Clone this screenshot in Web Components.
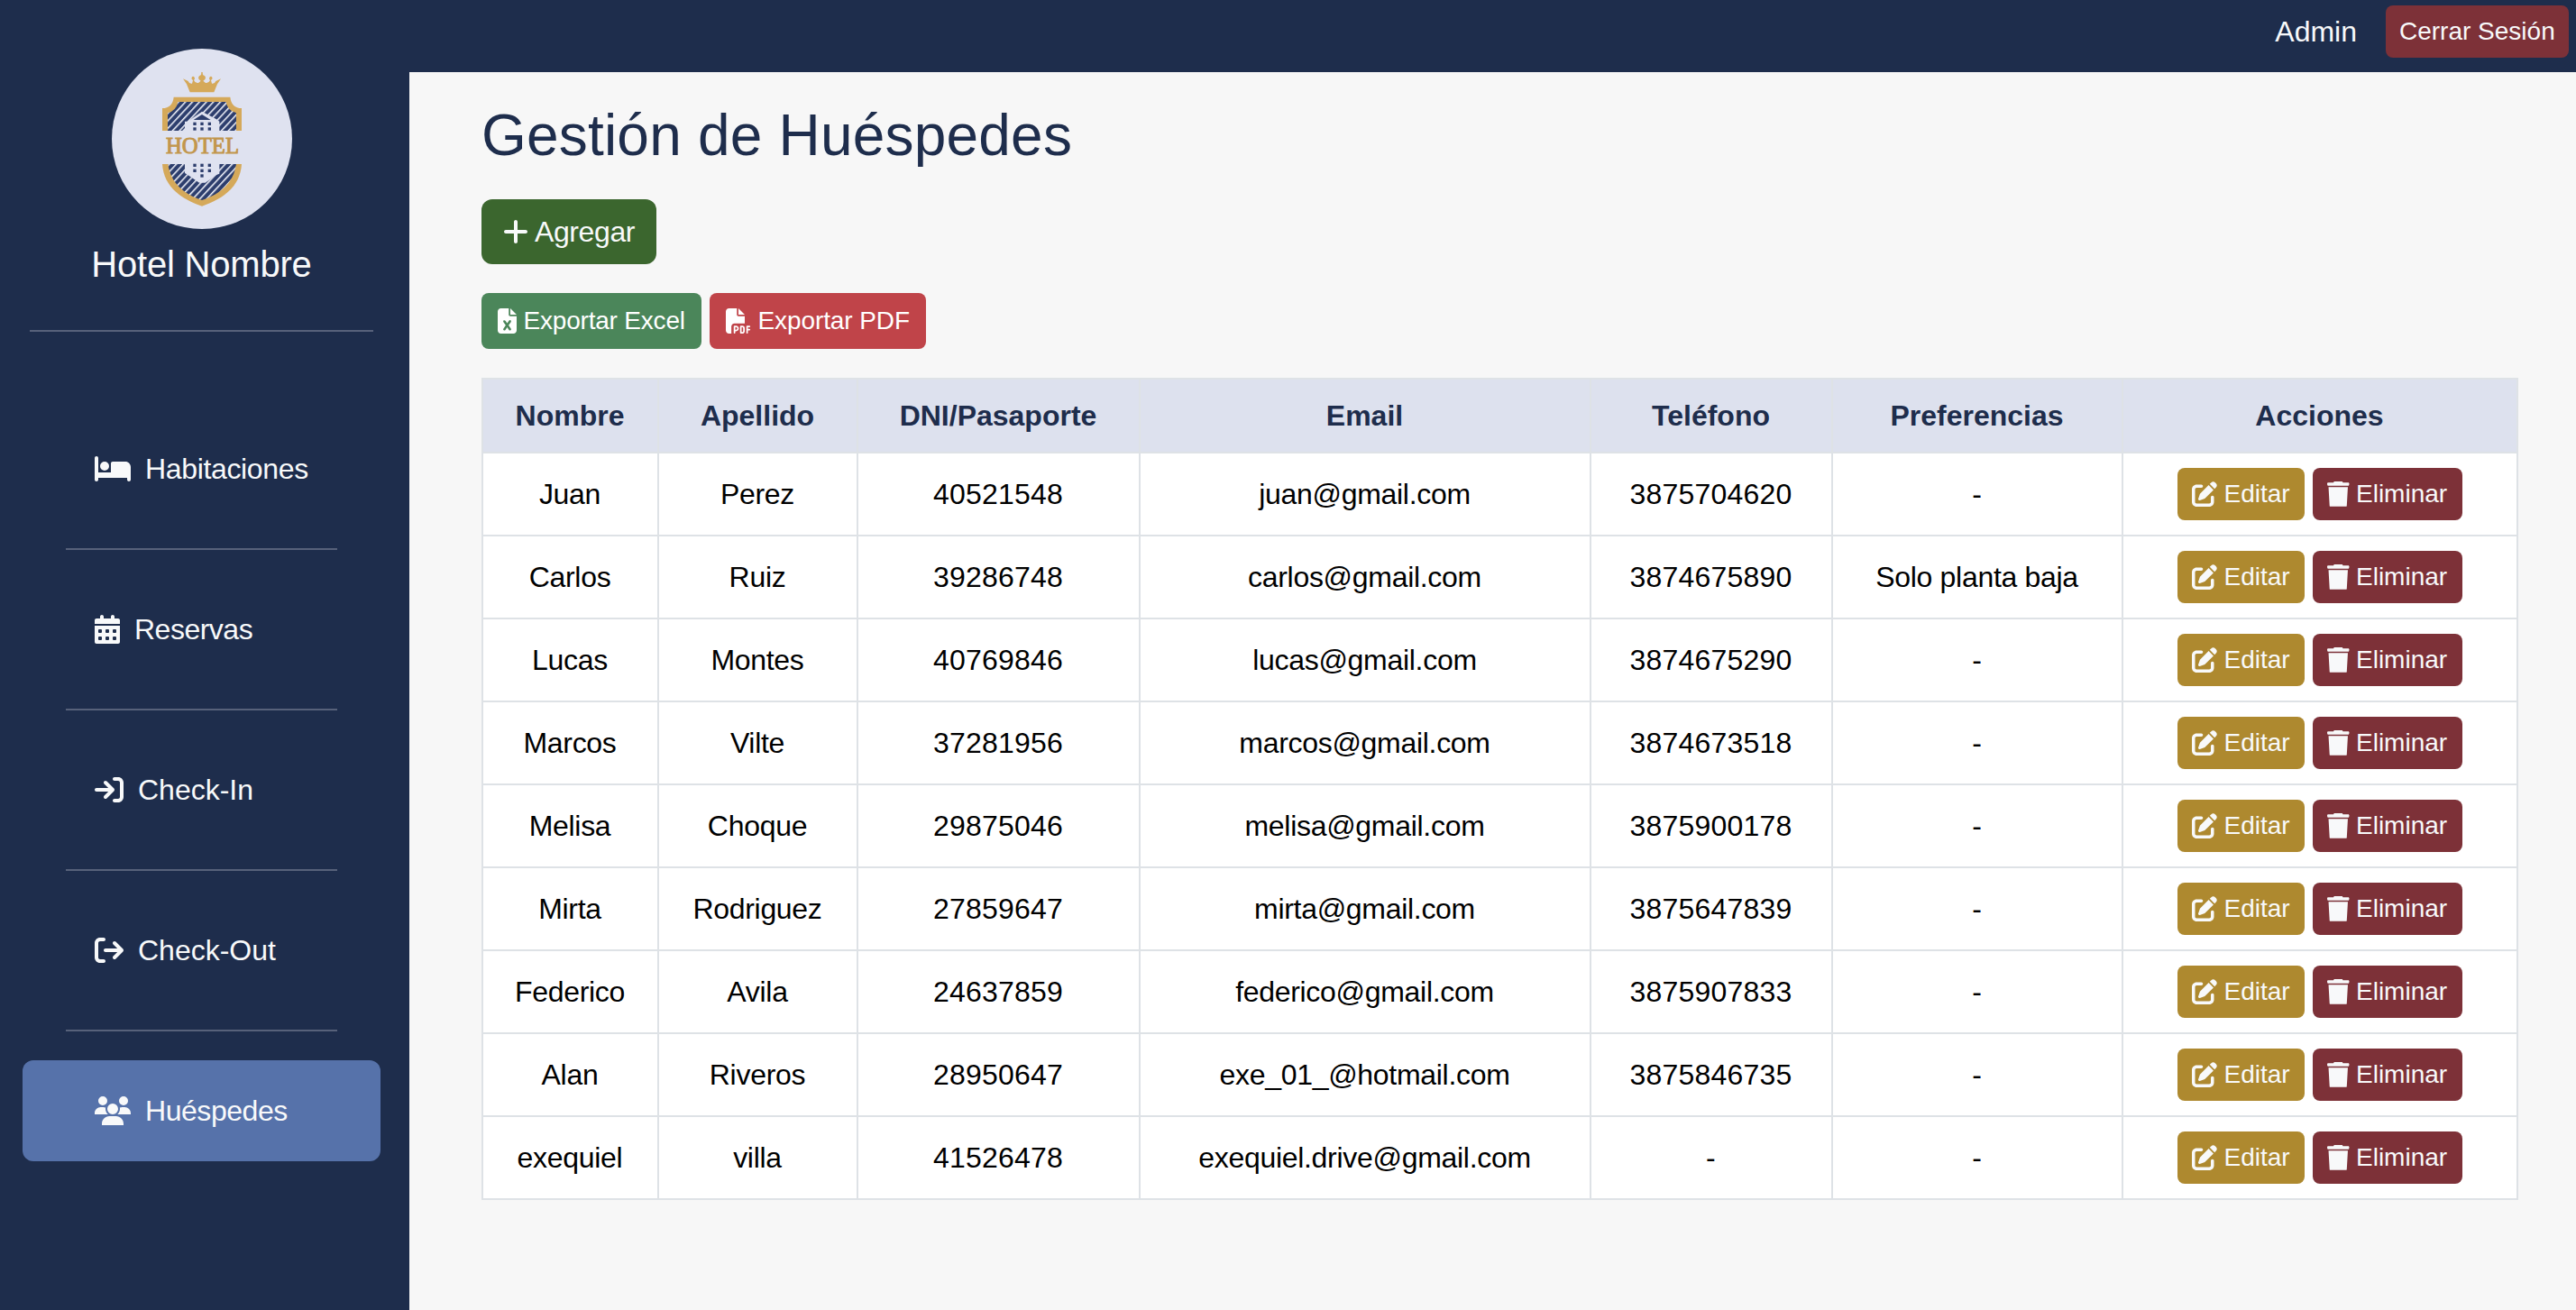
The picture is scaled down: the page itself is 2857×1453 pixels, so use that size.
<!DOCTYPE html>
<html lang="es">
<head>
<meta charset="utf-8">
<title>Gestión de Huéspedes</title>
<style>
html,body{margin:0;height:100%}
body{background:#f7f7f7;font-family:"Liberation Sans",Arial,sans-serif;font-size:32px;overflow:hidden;
--navy:#1e2d4c;--light:#f8f9fa;--wine:#7d3138}
</style>
</head>
<body>
<hotel-app></hotel-app>
<script>
const sq=(x,y)=>`M${x+16} ${y}h32a16 16 0 0 1 16 16v32a16 16 0 0 1-16 16h-32a16 16 0 0 1-16-16v-32a16 16 0 0 1 16-16z`;
const ICONS={
bed:[640,"M32 32c17.7 0 32 14.3 32 32V320H288V160c0-17.7 14.3-32 32-32H544c53 0 96 43 96 96V448c0 17.7-14.3 32-32 32s-32-14.3-32-32V416H64v32c0 17.7-14.3 32-32 32s-32-14.3-32-32V64C0 46.3 14.3 32 32 32zm144 96a80 80 0 1 1 0 160 80 80 0 1 1 0-160z"],
calendar:[448,"M128 0c17.7 0 32 14.3 32 32V64H288V32c0-17.7 14.3-32 32-32s32 14.3 32 32V64h64c17.7 0 32 14.3 32 32v64H0V96C0 78.3 14.3 64 32 64H96V32c0-17.7 14.3-32 32-32zM0 192H448V480c0 17.7-14.3 32-32 32H32c-17.7 0-32-14.3-32-32V192z"+[64,192,320].map(x=>sq(x,256)+sq(x,384)).join("")],
enter:[512,"M352 96l64 0c17.7 0 32 14.3 32 32l0 256c0 17.7-14.3 32-32 32l-64 0c-17.7 0-32 14.3-32 32s14.3 32 32 32l64 0c53 0 96-43 96-96l0-256c0-53-43-96-96-96l-64 0c-17.7 0-32 14.3-32 32s14.3 32 32 32zm-9.4 182.6c12.5-12.5 12.5-32.8 0-45.3l-128-128c-12.5-12.5-32.8-12.5-45.3 0s-12.5 32.8 0 45.3L242.7 224 32 224c-17.7 0-32 14.3-32 32s14.3 32 32 32l210.7 0-73.4 73.4c-12.5 12.5-12.5 32.8 0 45.3s32.8 12.5 45.3 0l128-128z"],
leave:[512,"M502.6 278.6c12.5-12.5 12.5-32.8 0-45.3l-128-128c-12.5-12.5-32.8-12.5-45.3 0s-12.5 32.8 0 45.3L402.7 224 192 224c-17.7 0-32 14.3-32 32s14.3 32 32 32l210.7 0-73.4 73.4c-12.5 12.5-12.5 32.8 0 45.3s32.8 12.5 45.3 0l128-128zM160 96c17.7 0 32-14.3 32-32s-14.3-32-32-32L96 32C43 32 0 75 0 128L0 384c0 53 43 96 96 96l64 0c17.7 0 32-14.3 32-32s-14.3-32-32-32l-64 0c-17.7 0-32-14.3-32-32l0-256c0-17.7 14.3-32 32-32l64 0z"],
users:[640,"M144 0a80 80 0 1 1 0 160A80 80 0 1 1 144 0zM512 0a80 80 0 1 1 0 160A80 80 0 1 1 512 0zM0 298.7C0 239.8 47.8 192 106.7 192h42.7c15.9 0 31 3.5 44.6 9.7c-1.3 7.2-1.9 14.7-1.9 22.3c0 38.2 16.8 72.5 43.3 96H0zM405.3 320c26.1-23.5 42.8-57.8 42.8-96c0-7.6-.7-15-1.9-22.3c13.6-6.3 28.7-9.7 44.6-9.7h42.7C592.2 192 640 239.8 640 298.7V320H405.3zM224 224a96 96 0 1 1 192 0 96 96 0 1 1 -192 0zM128 485.3C128 411.7 187.7 352 261.3 352H378.7C452.3 352 512 411.7 512 485.3V512H128z"],
plus:[448,"M256 80c0-17.7-14.3-32-32-32s-32 14.3-32 32V224H48c-17.7 0-32 14.3-32 32s14.3 32 32 32H192V432c0 17.7 14.3 32 32 32s32-14.3 32-32V288H400c17.7 0 32-14.3 32-32s-14.3-32-32-32H256V80z"],
excel:[384,"M64 0C28.7 0 0 28.7 0 64V448c0 35.3 28.7 64 64 64H320c35.3 0 64-28.7 64-64V160H256c-17.7 0-32-14.3-32-32V0H64zM256 0V128H384L256 0zM155.7 250.2L192 302.1l36.3-51.9c7.6-10.9 22.6-13.5 33.4-5.9s13.5 22.6 5.9 33.4L221.3 344l46.4 66.2c7.6 10.9 5 25.8-5.9 33.4s-25.8 5-33.4-5.9L192 385.8l-36.3 51.9c-7.6 10.9-22.6 13.5-33.4 5.9s-13.5-22.6-5.9-33.4L162.7 344l-46.4-66.2c-7.6-10.9-5-25.8 5.9-33.4s25.8-5 33.4 5.9z"],
pdf:[512,"M0 64C0 28.7 28.7 0 64 0H224V128c0 17.7 14.3 32 32 32H384V304H176c-35.3 0-64 28.7-64 64V512H64c-35.3 0-64-28.7-64-64V64zm384 64H256V0L384 128zM176 352h32c30.9 0 56 25.1 56 56s-25.1 56-56 56H192v32c0 8.8-7.2 16-16 16s-16-7.2-16-16V368c0-8.8 7.2-16 16-16zm32 80c13.3 0 24-10.7 24-24s-10.7-24-24-24H192v48h16zm96-80h32c26.5 0 48 21.5 48 48v64c0 26.5-21.5 48-48 48H304c-8.8 0-16-7.2-16-16V368c0-8.8 7.2-16 16-16zm32 128c8.8 0 16-7.2 16-16V400c0-8.8-7.2-16-16-16H320v96h16zm80-112c0-8.8 7.2-16 16-16h48c8.8 0 16 7.2 16 16s-7.2 16-16 16H448v32h32c8.8 0 16 7.2 16 16s-7.2 16-16 16H448v48c0 8.8-7.2 16-16 16s-16-7.2-16-16V368z"],
edit:[512,"M471.6 21.7c-21.9-21.9-57.3-21.9-79.2 0L362.3 51.7l97.9 97.9 30.1-30.1c21.9-21.9 21.9-57.3 0-79.2L471.6 21.7zm-299.2 220c-6.1 6.1-10.8 13.6-13.5 21.9l-29.6 88.8c-2.9 8.6-.6 18.1 5.8 24.6s15.9 8.7 24.6 5.8l88.8-29.6c8.2-2.7 15.7-7.4 21.9-13.5L437.7 172.3 339.7 74.3 172.4 241.7zM96 64C43 64 0 107 0 160V416c0 53 43 96 96 96H352c53 0 96-43 96-96V320c0-17.7-14.3-32-32-32s-32 14.3-32 32v96c0 17.7-14.3 32-32 32H96c-17.7 0-32-14.3-32-32V160c0-17.7 14.3-32 32-32h96c17.7 0 32-14.3 32-32s-14.3-32-32-32H96z"],
trash:[448,"M135.2 8L128 22H20C8 22 0 32 0 48S10 88 24 88H424c14 0 24-24 24-40S440 22 428 22H320l-7.2-14C310 2 300 0 290 0H158c-10 0-19 2-22.800 8zM420 112H28L50 500Q51 508 58 508H390Q397 508 398 500L420 112z"]
};
class Base extends HTMLElement{
  constructor(){super();this.attachShadow({mode:"open"})}
  connectedCallback(){this.shadowRoot.innerHTML=this.render()}
}
const define=(n,render)=>customElements.define(n,class extends Base{render(){return render(this)}});

define("app-icon",el=>{
  const [w,d]=ICONS[el.getAttribute("name")];
  return `<style>:host{display:block;flex:none}svg{display:block;height:1em;width:${w/512}em;fill:currentColor}</style>
  <svg viewBox="0 0 ${w} 512"><path fill-rule="evenodd" d="${d}"/></svg>`;
});

define("app-button",()=>`<style>
:host{display:inline-block;flex:none;box-sizing:border-box}
button{all:unset;box-sizing:border-box;display:flex;align-items:center;gap:7.5px;width:100%;height:58px;padding-left:16px;border-radius:8px;
background:var(--wine);color:var(--light);font:28px/42px "Liberation Sans",Arial,sans-serif;white-space:nowrap}
:host([kind=edit]) button{background:#ae892f}
:host([kind=excel]) button{background:#4b865a;height:62px;padding-left:18px;letter-spacing:-.2px;color:#fff}
:host([kind=pdf]) button{background:#c04449;height:62px;padding-left:18px;letter-spacing:-.1px;color:#fff}
:host([kind=add]) button{background:#3b662e;height:72px;padding-left:24px;gap:7px;border-radius:12px;font-size:32px;letter-spacing:-.4px}
:host([kind=logout]) button{padding-left:15px}
</style><button><slot name="icon"></slot><slot></slot></button>`);

define("hotel-logo",()=>{
  const win=(x,y)=>`<rect x="${x-5}" y="${y-5}" width="10" height="10"/>`;
  const wins=[292,309,430,448].map(y=>[318,342,367].map(x=>win(x,y)).join("")).join("")+win(342,465);
  return `<style>:host{display:block;width:200px;height:200px}svg{display:block}</style>
<svg width="200" height="200" viewBox="42 42 600 600">
<defs><pattern id="s" width="17" height="17" patternUnits="userSpaceOnUse" patternTransform="rotate(43)">
<rect width="17" height="17" fill="#2d3e6d"/><rect width="4.6" height="17" fill="#f1f3fa"/></pattern></defs>
<circle cx="342" cy="342" r="300" fill="#dfe2f0"/>
<g fill="#d5a95a">
<path d="M302 187L291 160L279 142L296 150Q300 160 309 158L312 147Q305 143 308 137Q312 132 317 137Q320 143 315 147Q320 158 331 155L338 149Q330 146 330 138Q332 132 338 130L340 126Q337 122 342 119Q347 122 344 126L346 130Q353 132 354 138Q354 146 346 149L353 155Q364 158 369 147Q364 143 367 137Q372 132 376 137Q379 143 372 147L375 158Q384 160 388 150L405 142L393 160L382 187Z"/>
<path d="M210 315V240Q244 240 248 203H436Q440 240 474 240V315Z"/>
<path d="M210 426H474C469 505 405 545 342 566C279 545 215 505 210 426Z"/></g>
<g fill="url(#s)"><path d="M228 315V256Q256 249 262 219H422Q428 249 456 256V315Z"/>
<path d="M229 426H456C447 490 402 526 342 546C282 526 238 490 229 426Z"/></g>
<g fill="#dfe2f0"><path d="M276 315L285 306V284L295 284L342 251L389 276L400 284V315Z"/>
<path d="M285 426H400V458L390 462L353 488H333L296 463L285 456Z"/></g>
<g fill="#2d3e6d"><path d="M314 279L342 261L371 279Z"/>${wins}</g>
<text x="222" y="389" font-family="'Liberation Serif',serif" font-size="77" textLength="243" lengthAdjust="spacingAndGlyphs" fill="#c2964c" stroke="#c2964c" stroke-width="3">HOTEL</text>
</svg>`});

define("nav-item",el=>`<style>
:host{display:flex;align-items:center;box-sizing:border-box;width:397px;height:112px;padding-left:80px;gap:16px;border-radius:12px;
font-size:32px;line-height:48px;white-space:nowrap;color:var(--light);letter-spacing:${el.getAttribute("track")||0}px}
:host([active]){background:#5672aa}</style><app-icon name="${el.getAttribute("icon")}"></app-icon><slot></slot>`);

define("side-bar",()=>`<style>
:host{display:flex;flex-direction:column;align-items:center;box-sizing:border-box;width:454px;height:100%;padding:54px 7px 0 0;background:var(--navy);color:var(--light)}
h2{margin:9px 0 0;font-size:40px;font-weight:400;line-height:60px;height:60px;letter-spacing:-.2px;white-space:nowrap}
.top{width:381px;height:2px;margin:43px 0 96px;background:#57617a;flex:none}
.line{width:301px;height:2px;margin:32px 0;background:#57617a;flex:none}
nav{display:flex;flex-direction:column;align-items:center}
</style>
<hotel-logo></hotel-logo><h2>Hotel Nombre</h2><div class="top"></div>
<nav>
<nav-item icon="bed" track="-.35">Habitaciones</nav-item><div class="line"></div>
<nav-item icon="calendar" track="-.5">Reservas</nav-item><div class="line"></div>
<nav-item icon="enter">Check-In</nav-item><div class="line"></div>
<nav-item icon="leave">Check-Out</nav-item><div class="line"></div>
<nav-item icon="users" track="-.45" active>Huéspedes</nav-item>
</nav>`);

define("top-bar",()=>`<style>
:host{display:flex;justify-content:flex-end;align-items:flex-start;box-sizing:border-box;height:80px;flex:none;padding:6px 8px 0 0;gap:32px;background:var(--navy);color:var(--light)}
span{line-height:58px}app-button{width:203px}</style>
<span>Admin</span><app-button kind="logout">Cerrar Sesión</app-button>`);

const GUESTS=[
["Juan","Perez","40521548","juan@gmail.com","3875704620","-"],
["Carlos","Ruiz","39286748","carlos@gmail.com","3874675890","Solo planta baja"],
["Lucas","Montes","40769846","lucas@gmail.com","3874675290","-"],
["Marcos","Vilte","37281956","marcos@gmail.com","3874673518","-"],
["Melisa","Choque","29875046","melisa@gmail.com","3875900178","-"],
["Mirta","Rodriguez","27859647","mirta@gmail.com","3875647839","-"],
["Federico","Avila","24637859","federico@gmail.com","3875907833","-"],
["Alan","Riveros","28950647","exe_01_@hotmail.com","3875846735","-"],
["exequiel","villa","41526478","exequiel.drive@gmail.com","-","-"]];
const COLS=[["Nombre",195],["Apellido",221],["DNI/Pasaporte",313],["Email",500],["Teléfono",268],["Preferencias",322],["Acciones",438]];

define("guest-table",()=>`<style>
:host{display:block;width:2259px}
table{box-sizing:border-box;width:2259px;table-layout:fixed;border-collapse:separate;border-spacing:0;border:solid #dee2e6;border-width:2px 0 0 2px;background:#fff;font-size:32px;line-height:48px}
th,td{box-sizing:border-box;padding:0 1px 0 0;text-align:center;vertical-align:middle;white-space:nowrap;border:solid #dee2e6;border-width:0 2px 2px 0}
th{height:82px;background:#dde1ee;color:var(--navy)}
td{height:92px;color:#000;letter-spacing:-.3px}
td.num{letter-spacing:.2px}
td:last-child{padding:0}
.actions{display:flex;justify-content:center;gap:9px;letter-spacing:0}
.e{width:141px}.d{width:166px}
</style>
<table><colgroup>${COLS.map(c=>`<col style="width:${c[1]}px">`).join("")}</colgroup>
<thead><tr>${COLS.map(c=>`<th>${c[0]}</th>`).join("")}</tr></thead>
<tbody>${GUESTS.map(g=>`<tr>${g.map((t,i)=>`<td${i==2||i==4?' class="num"':''}>${t}</td>`).join("")}<td><div class="actions"><app-button class="e" kind="edit"><app-icon slot="icon" name="edit"></app-icon>Editar</app-button><app-button class="d"><app-icon slot="icon" name="trash"></app-icon>Eliminar</app-button></div></td></tr>`).join("")}</tbody></table>`);

define("hotel-app",()=>`<style>
:host{display:flex;width:100%;height:100vh;min-height:1453px}
side-bar{flex:none}
.right{flex:1;display:flex;flex-direction:column;min-width:0}
main{padding:32px 64px 0 80px}
h1{margin:0 0 32px;height:77px;font-size:64px;line-height:76px;font-weight:400;color:var(--navy);letter-spacing:.2px}
.add{display:flex}.add app-button{width:194px}
.export{display:flex;gap:9px;margin:32px 0}
.x{width:244px}.p{width:240px}
</style>
<side-bar></side-bar>
<div class="right"><top-bar></top-bar>
<main><h1>Gestión de Huéspedes</h1>
<div class="add"><app-button kind="add"><app-icon slot="icon" name="plus"></app-icon>Agregar</app-button></div>
<div class="export"><app-button class="x" kind="excel"><app-icon slot="icon" name="excel"></app-icon>Exportar Excel</app-button><app-button class="p" kind="pdf"><app-icon slot="icon" name="pdf"></app-icon>Exportar PDF</app-button></div>
<guest-table></guest-table></main></div>`);
</script>
</body>
</html>
